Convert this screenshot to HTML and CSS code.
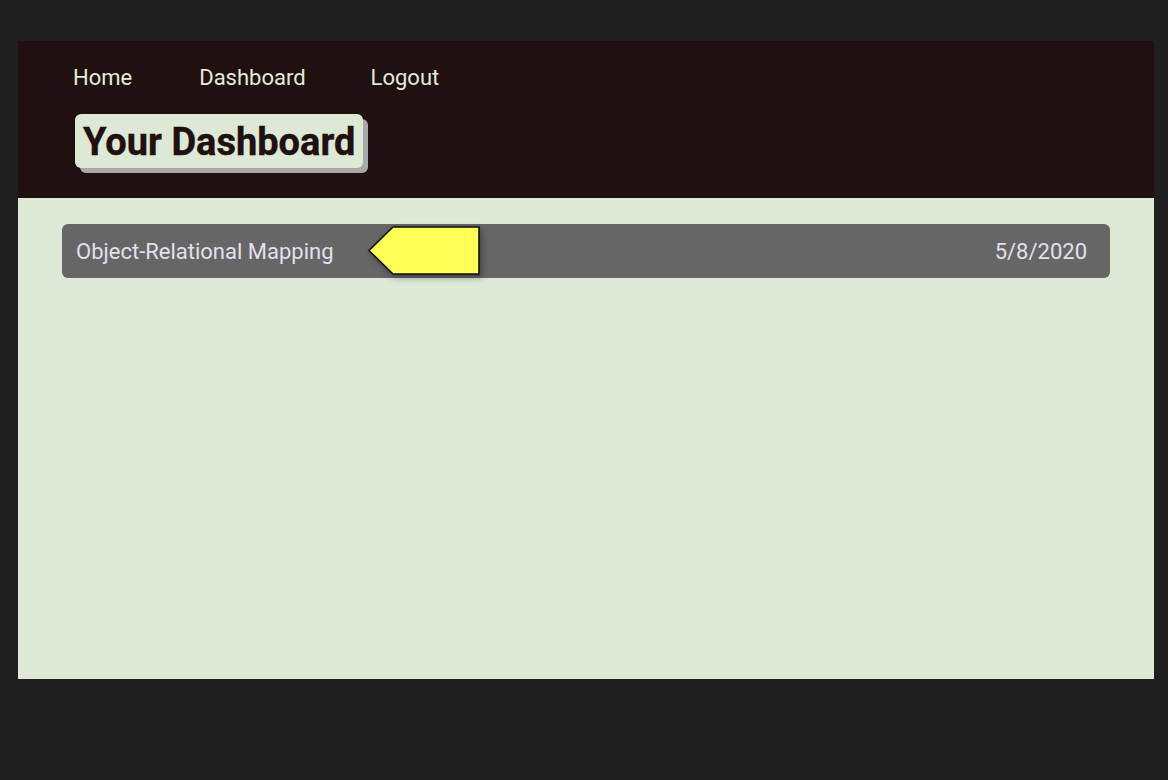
FILE: index.html
```html
<!DOCTYPE html>
<html>
<head>
<meta charset="utf-8">
<link rel="stylesheet" href="styles.css">
</head>
<body>
<div class="app">
  <header class="header">
    <nav class="nav">
      <a class="nav-link" href="#">Home</a>
      <a class="nav-link" href="#">Dashboard</a>
      <a class="nav-link" href="#">Logout</a>
    </nav>
    <h1 class="title">Your Dashboard</h1>
  </header>
  <main class="content">
    <div class="row">
      <div class="row-left">
        <span class="row-title">Object-Relational Mapping</span>
        <svg class="tag" width="114" height="52" viewBox="0 0 114 52">
          <polygon points="25,1 111,1 111,48 25,48 1,24.5" fill="#ffff55" stroke="#111" stroke-width="1.6" stroke-linejoin="miter"/>
        </svg>
      </div>
      <span class="row-date">5/8/2020</span>
    </div>
  </main>
</div>
</body>
</html>
```

FILE: styles.css
```css
html, body {
  margin: 0;
  padding: 0;
  background: #1f1f1f;
  font-family: Roboto, "Liberation Sans", sans-serif;
}
.app {
  margin: 41px 14px 0 18px;
  width: 1136px;
}
.header {
  background: #201010;
  height: 157px;
  box-sizing: border-box;
  padding: 20px 0 0 55px;
}
.nav {
  display: flex;
  height: 33px;
  align-items: center;
}
.nav-link {
  color: #e3eadb;
  text-decoration: none;
  font-size: 22px;
  margin-right: 67px;
}
.nav-link:nth-child(2) {
  margin-right: 65px;
}
.title {
  display: inline-block;
  box-sizing: border-box;
  margin: 20px 0 0 2px;
  background: #dde9d4;
  color: #201010;
  font-size: 38px;
  font-weight: 700;
  line-height: 52px;
  height: 54px;
  padding: 2px 8px 0 8px;
  border-radius: 6px;
  box-shadow: 5px 5px 0 #a9a9a9;
  -webkit-text-stroke: 0.4px #201010;
}
.content {
  background: #dde9d4;
  height: 481px;
  box-sizing: border-box;
  padding: 26px 44px 0 44px;
}
.row {
  display: flex;
  justify-content: space-between;
  align-items: center;
  background: #666666;
  border-radius: 6px;
  height: 54px;
  padding: 0 23px 0 14px;
}
.row-left {
  display: flex;
  align-items: center;
}
.row-title, .row-date {
  color: #e2e0ee;
  font-size: 22px;
}
.tag {
  margin-left: 34px;
  margin-top: 1px;
  filter: drop-shadow(2px 3px 3px rgba(0,0,0,0.35));
}
```
